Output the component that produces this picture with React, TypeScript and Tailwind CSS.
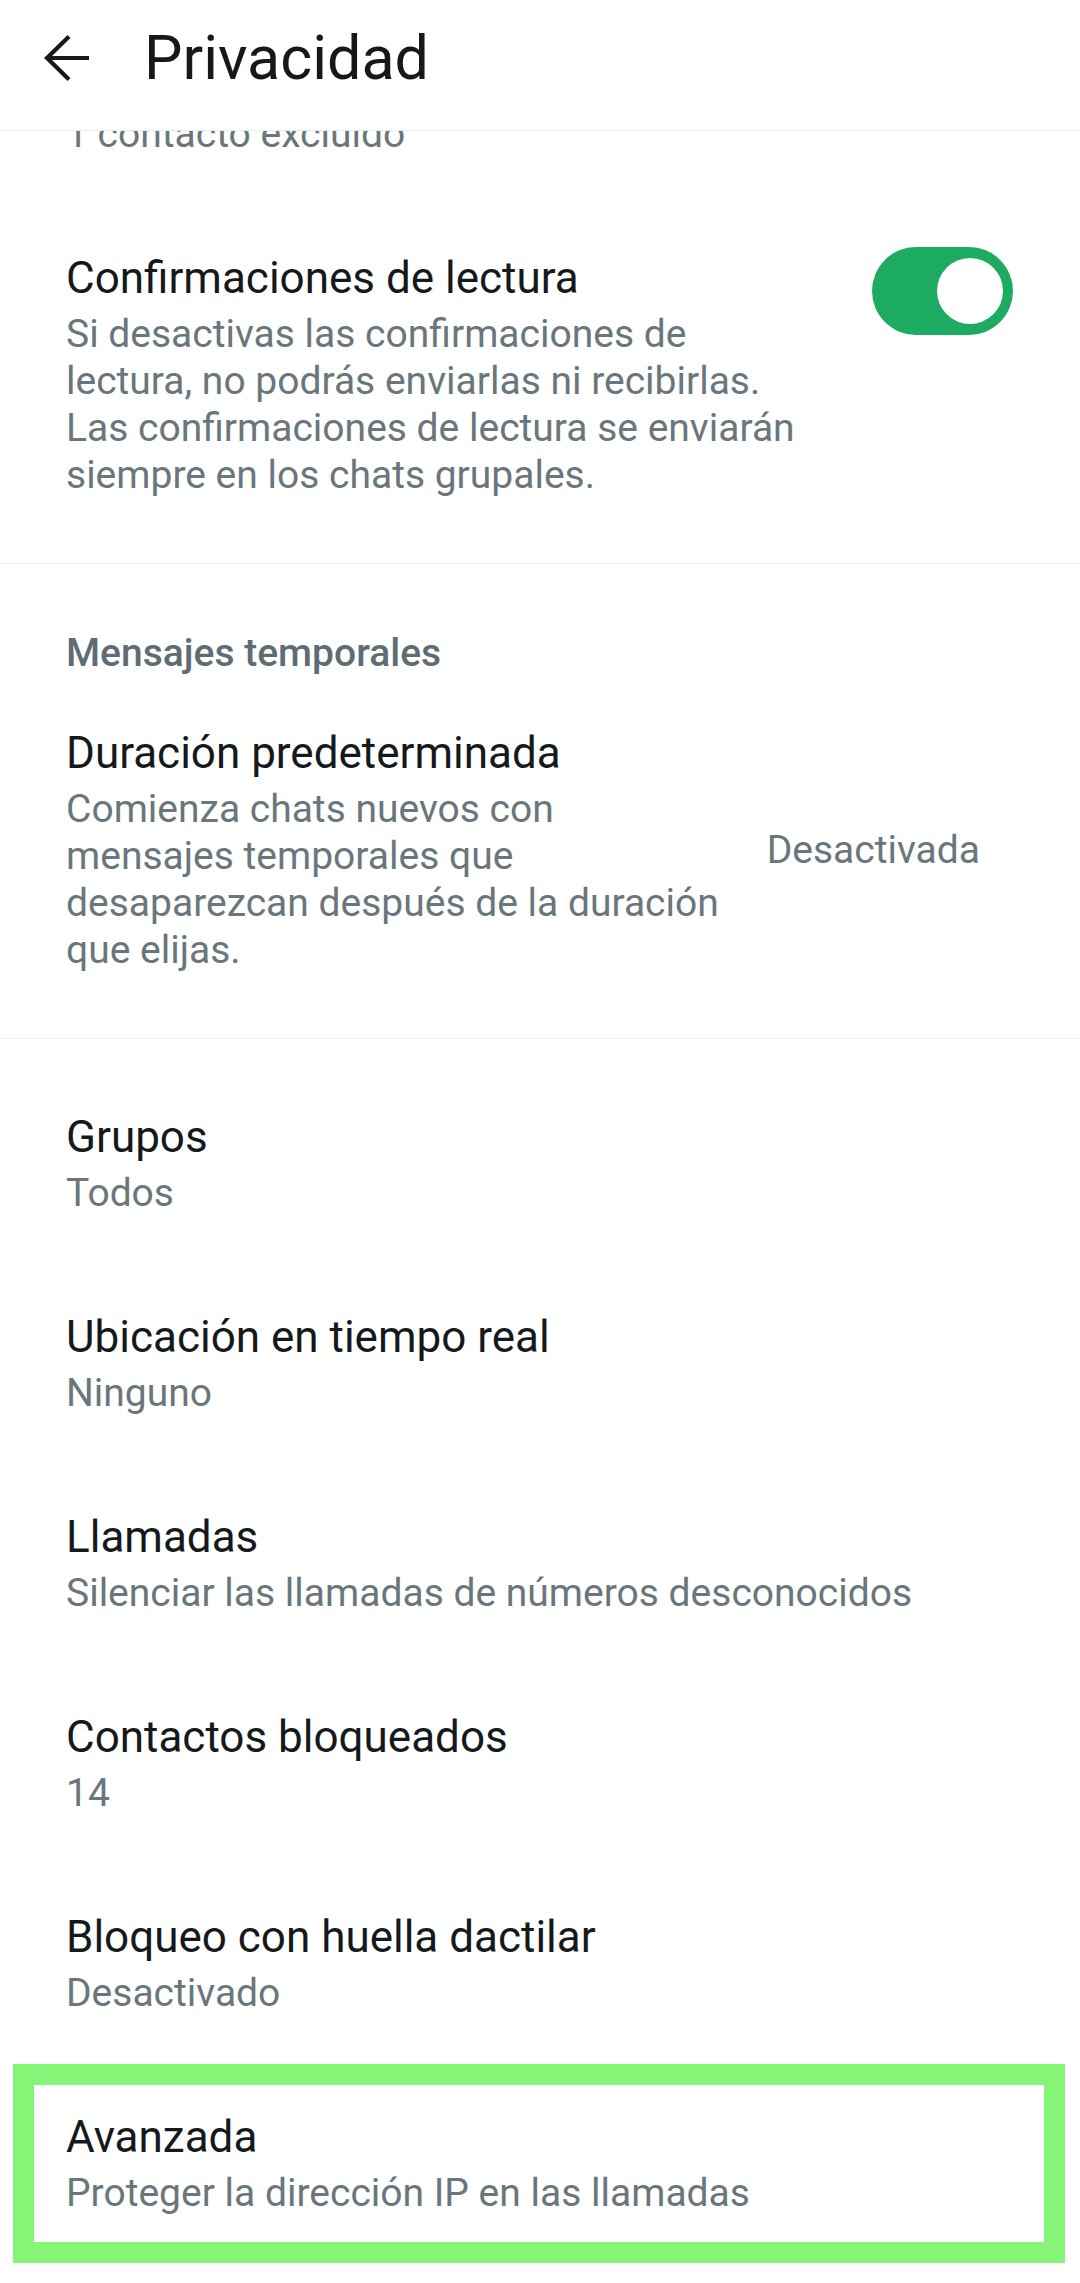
import React from 'react';

const title = "text-[44px] leading-[52px] text-[#15191c] whitespace-nowrap";
const sub = "text-[39px] leading-[47px] text-[#6a767c] whitespace-nowrap";

type Row = { label: string; value: string };

const rows: Row[] = [
  { label: 'Grupos', value: 'Todos' },
  { label: 'Ubicación en tiempo real', value: 'Ninguno' },
  { label: 'Llamadas', value: 'Silenciar las llamadas de números desconocidos' },
  { label: 'Contactos bloqueados', value: '14' },
  { label: 'Bloqueo con huella dactilar', value: 'Desactivado' },
];

const BackArrow = () => (
  <svg width="48" height="48" viewBox="0 0 48 48" fill="none" stroke="#15191c" strokeWidth="4.2">
    <path d="M26 2.5 L4 24 L26 45.5" strokeLinejoin="miter" />
    <path d="M4 24 H46" />
  </svg>
);

const Toggle = () => (
  <div className="-mt-[5px] flex h-[88px] w-[141px] shrink-0 items-center justify-end rounded-full bg-[#1daa61] pr-[10px]">
    <div className="h-[66px] w-[66px] rounded-full bg-white" />
  </div>
);

const SettingRow = ({ label, value, highlight }: Row & { highlight?: boolean }) => (
  <div className="relative px-[66px] pt-[47px] pb-[47px]">
    <p className={title}>{label}</p>
    <p className={`mt-[7px] ${sub}`}>{value}</p>
    {highlight && (
      <div className="pointer-events-none absolute top-0 left-[13px] h-[199px] w-[1052px] border-[21px] border-[#86f477]" />
    )}
  </div>
);

export default function App() {
  return (
    <div className="h-[2283px] w-[1080px] overflow-hidden bg-white font-['Roboto','Noto_Sans',sans-serif]">
      {/* top bar */}
      <header className="flex h-[131px] items-center border-b border-[#e9edef] pb-[14px] pl-[43px]">
        <BackArrow />
        <h1 className="ml-[53px] text-[61px] leading-[70px] text-[#15191c]">Privacidad</h1>
      </header>

      {/* previous row, scrolled under the bar */}
      <div className="flex h-[27px] flex-col justify-end overflow-hidden px-[66px]">
        <p className={`shrink-0 ${sub}`}>1 contacto excluido</p>
      </div>

      {/* read receipts */}
      <section className="flex items-start justify-between border-b border-[#eceff1] pt-[94px] pb-[64px] pl-[66px] pr-[67px]">
        <div>
          <p className={title}>Confirmaciones de lectura</p>
          <div className={`mt-[7px] ${sub}`}>
            <span className="block">Si desactivas las confirmaciones de</span>
            <span className="block">lectura, no podrás enviarlas ni recibirlas.</span>
            <span className="block">Las confirmaciones de lectura se enviarán</span>
            <span className="block">siempre en los chats grupales.</span>
          </div>
        </div>
        <Toggle />
      </section>

      {/* disappearing messages */}
      <section className="border-b border-[#eceff1] pt-[67px] pb-[64px]">
        <p className="px-[66px] text-[39px] leading-[44px] font-medium text-[#5f6c74]">Mensajes temporales</p>
        <div className="mt-[52px] flex items-center justify-between pl-[66px] pr-[100px]">
          <div>
            <p className={title}>Duración predeterminada</p>
            <div className={`mt-[7px] ${sub}`}>
              <span className="block">Comienza chats nuevos con</span>
              <span className="block">mensajes temporales que</span>
              <span className="block">desaparezcan después de la duración</span>
              <span className="block">que elijas.</span>
            </div>
          </div>
          <p className={sub}>Desactivada</p>
        </div>
      </section>

      {/* other settings */}
      <div className="pt-[25px]">
        {rows.map((r) => (
          <SettingRow key={r.label} {...r} />
        ))}
        <SettingRow label="Avanzada" value="Proteger la dirección IP en las llamadas" highlight />
      </div>
    </div>
  );
}
